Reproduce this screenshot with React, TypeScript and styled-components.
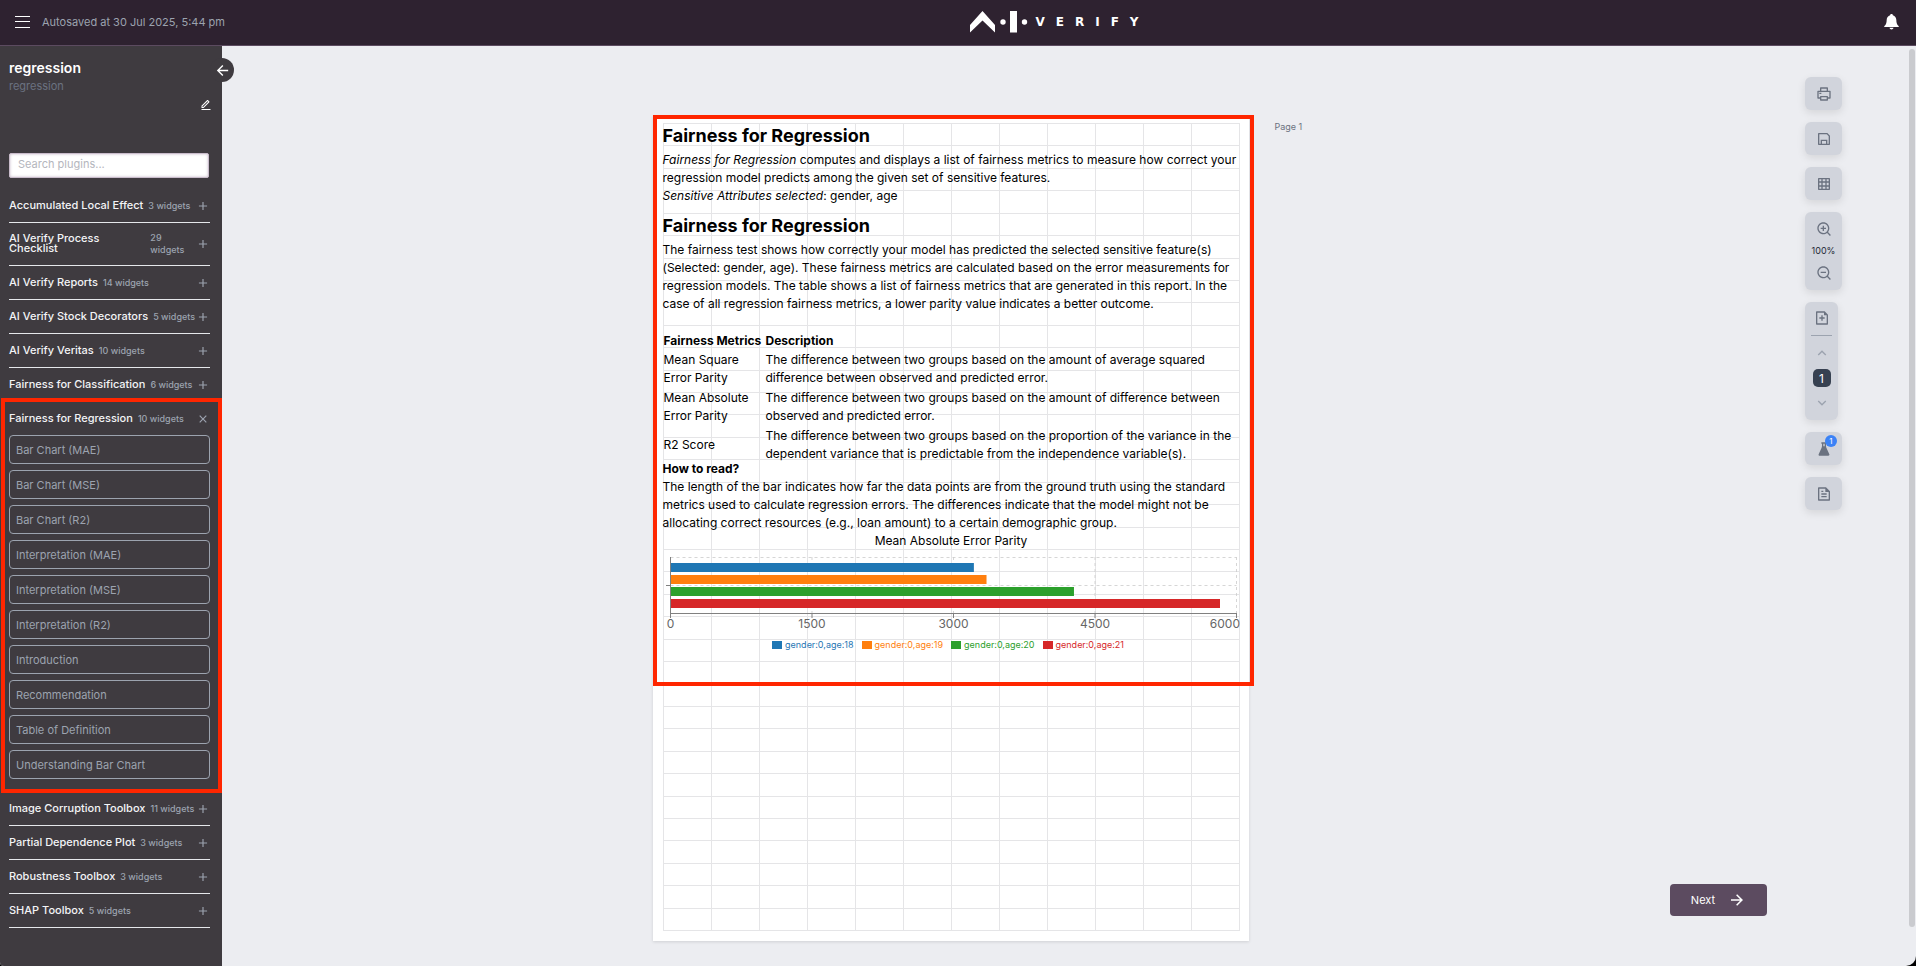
import React from 'react';
import styled, { createGlobalStyle, css } from 'styled-components';
import {
  RiAddLine,
  RiArrowDownSLine,
  RiArrowLeftLine,
  RiArrowRightLine,
  RiArrowUpSLine,
  RiCloseLine,
  RiEditLine,
  RiFileAddLine,
  RiFileTextLine,
  RiFlaskFill,
  RiGridLine,
  RiPrinterLine,
  RiSaveLine,
  RiZoomInLine,
  RiZoomOutLine,
} from 'react-icons/ri';

const GlobalStyle = createGlobalStyle`
  *, *::before, *::after { box-sizing: border-box; }
  html, body, #root { height: 100%; }
  body {
    margin: 0;
    background: #000;
    font-family: Inter, "Liberation Sans", sans-serif;
    -webkit-font-smoothing: antialiased;
  }
  h1, h2, h3, p { margin: 0; }
  button, input { font-family: inherit; }
`;

const colors = {
  header: '#2e2230',
  sidebar: '#3f3b40',
  accent: '#5c4b60',
  canvas: '#ecedf1',
  tool: '#d1d4dc',
  icon: '#6b7280',
  muted: '#9ca3af',
  highlight: '#ff2600',
};

const bareButton = css`
  display: inline-flex;
  align-items: center;
  justify-content: center;
  padding: 0;
  border: 0;
  background: none;
  color: inherit;
  cursor: pointer;
`;

const Shell = styled.div`
  display: flex;
  flex-direction: column;
  min-height: 100%;
  overflow: hidden;
  background: ${colors.canvas};
  border-radius: 0 0 10px 4px;
`;

/* ---------- Header ---------- */

const Header = styled.header`
  display: flex;
  align-items: center;
  justify-content: space-between;
  height: 46px;
  padding: 0 17px 2px 15px;
  background: ${colors.header};
  border-bottom: 1px solid ${colors.accent};
  color: #fff;
`;

const HeaderStart = styled.div`
  display: flex;
  align-items: center;
  gap: 12px;
`;

const IconButton = styled.button`
  ${bareButton}
`;

const SaveStatus = styled.span`
  font-size: 11px;
  line-height: 16px;
  color: ${colors.muted};
`;

const Logo = styled.a`
  display: flex;
  align-items: center;
  gap: 7px;
  color: #fff;
  text-decoration: none;
`;

const LogoWord = styled.span`
  margin-right: -11px;
  padding-top: 1px;
  font: bold 12px/16px "DejaVu Sans", sans-serif;
  letter-spacing: 11px;
`;

/* ---------- Sidebar ---------- */

const Body = styled.div`
  display: flex;
  flex: 1;
`;

const Sidebar = styled.aside`
  position: relative;
  flex: 0 0 222px;
  display: flex;
  flex-direction: column;
  padding: 12px 12px 24px 9px;
  background: ${colors.sidebar};
`;

const CollapseButton = styled.button`
  ${bareButton}
  position: absolute;
  top: 12px;
  right: -12px;
  width: 24px;
  height: 24px;
  border-radius: 50%;
  background: ${colors.sidebar};
  color: #fff;
`;

const ProjectName = styled.h1`
  font-size: 14px;
  line-height: 20px;
  font-weight: 600;
  color: #fff;
`;

const ProjectNote = styled.p`
  font-size: 11px;
  line-height: 16px;
  color: ${colors.icon};
`;

const EditRow = styled.div`
  display: flex;
  justify-content: flex-end;
  height: 59px;
  padding-top: 5px;
  margin-right: -2px;
  color: #fff;
`;

const EditButton = styled(IconButton)`
  width: 12px;
  height: 12px;
`;

const SearchInput = styled.input`
  width: 200px;
  height: 25px;
  margin-bottom: 11px;
  padding: 0 8px 3px;
  border: 1px solid #c9bccb;
  border-radius: 2px;
  background: #fff;
  box-shadow: inset 0 0 3px #c9bccb;
  font-size: 11px;
  outline: 0;
  &::placeholder {
    color: #b4b6bd;
    opacity: 1;
  }
`;

const Section = styled.section<{ $highlighted?: boolean }>`
  position: relative;
  border-bottom: 1px solid #e5e7eb;
  ${(p) =>
    p.$highlighted &&
    css`
      padding-bottom: 12px;
      &::after {
        content: '';
        position: absolute;
        inset: -4px -12px -2px -8px;
        border: 4px solid ${colors.highlight};
        pointer-events: none;
      }
    `}
`;

const SectionHeader = styled.button`
  ${bareButton}
  width: 100%;
  min-height: 33px;
  padding: 9px 0;
  text-align: left;
  color: ${colors.muted};
  svg {
    flex: none;
    margin-left: auto;
  }
`;

const SectionName = styled.span`
  margin: 0 5px 2px 0;
  font-size: 11px;
  line-height: 10px;
  font-weight: 500;
  color: #f3f4f6;
`;

const SectionCount = styled.span`
  font-size: 9px;
  line-height: 12px;
  font-weight: 500;
`;

const WidgetList = styled.div`
  display: flex;
  flex-direction: column;
  gap: 6px;
`;

const Widget = styled.button`
  ${bareButton}
  justify-content: flex-start;
  height: 29px;
  padding: 0 6px;
  border: 1px solid ${colors.muted};
  border-radius: 4px;
  font-size: 11px;
  line-height: 16px;
  color: ${colors.muted};
`;

/* ---------- Stage ---------- */

const Stage = styled.main`
  flex: 1;
  display: grid;
  grid-template-columns: 1fr auto 1fr;
  align-items: start;
  padding: 70px 0 24px 10px;
`;

const Page = styled.article`
  position: relative;
  grid-column: 2;
  width: 596px;
  min-height: 825px;
  padding: 7px 9px 10px 10px;
  background: #fff;
  box-shadow: 0 1px 3px rgba(0, 0, 0, 0.12);
`;

const PageHighlight = styled.div`
  position: absolute;
  inset: -1px -5px 255px 0;
  border: 4px solid ${colors.highlight};
  pointer-events: none;
`;

const PageLabel = styled.span`
  padding: 4px 0 0 26px;
  font-size: 9px;
  line-height: 14px;
  color: ${colors.icon};
`;

const PageGrid = styled.div`
  position: relative;
  min-height: 808px;
  color: #000;
`;

const GridLines = styled.svg`
  position: absolute;
  inset: 0;
  width: 100%;
  height: 100%;
  overflow: visible;
`;

const Content = styled.div`
  position: relative;
  font-size: 12px;
  line-height: 18px;
`;

const Title = styled.h2`
  padding-bottom: 2px;
  font-size: 18px;
  line-height: 26px;
  font-weight: 700;
  p + & {
    margin-top: 8px;
  }
`;

const Subtitle = styled.h3`
  font-size: 12px;
  line-height: 18px;
  font-weight: 700;
`;

const Metrics = styled.table`
  width: 100%;
  margin: 18px 0 -4px;
  border-collapse: collapse;
  th {
    padding: 1px 0 0 1px;
    text-align: left;
  }
  td {
    padding: 1px 0 1px 1px;
    vertical-align: middle;
  }
  th:first-child {
    width: 102px;
    white-space: nowrap;
  }
`;

const ChartTitle = styled.p`
  text-align: center;
`;

const Chart = styled.svg`
  display: block;
  width: 100%;
  height: 86px;
  overflow: visible;
  font-size: 12px;
`;

const Legend = styled.ul`
  display: flex;
  justify-content: center;
  gap: 8px;
  margin: 0;
  padding: 2px 6px 0 0;
  list-style: none;
  font-size: 9px;
  line-height: 14px;
`;

const LegendItem = styled.li<{ $color: string }>`
  display: flex;
  align-items: center;
  gap: 3px;
  color: ${(p) => p.$color};
  &::before {
    content: '';
    width: 10px;
    height: 8px;
    background: ${(p) => p.$color};
  }
`;

/* ---------- Tools ---------- */

const Side = styled.div`
  flex: 0 0 240px;
  display: flex;
  flex-direction: column;
  justify-content: space-between;
  align-items: flex-start;
  padding: 31px 0 50px 1px;
`;

const Tools = styled.nav`
  display: flex;
  flex-direction: column;
  align-items: flex-start;
  gap: 12px;
  margin-left: 135px;
  color: ${colors.icon};
`;

const toolSurface = css`
  background: ${colors.tool};
  border-radius: 6px;
  box-shadow: 0 3px 8px rgba(0, 0, 0, 0.1);
`;

const Tool = styled.button`
  ${bareButton}
  ${toolSurface}
  position: relative;
  width: 37px;
  height: 33px;
`;

const ZoomGroup = styled.div`
  ${toolSurface}
  display: flex;
  flex-direction: column;
  align-items: center;
  justify-content: space-between;
  width: 37px;
  height: 78px;
  padding: 9px 0;
`;

const ZoomLevel = styled.output`
  font-size: 9px;
  line-height: 12px;
  color: #1f2937;
`;

const PageNav = styled.div`
  ${toolSurface}
  display: flex;
  flex-direction: column;
  align-items: center;
  width: 33px;
  height: 118px;
  padding: 8px 6px;
`;

const Divider = styled.hr`
  width: 21px;
  margin: 9px 0 10px;
  border: 0;
  border-top: 1px solid ${colors.muted};
`;

const CurrentPage = styled.button`
  ${bareButton}
  width: 18px;
  height: 18px;
  margin: 9px 0;
  border-radius: 5px;
  background: #374151;
  color: #fff;
  font-size: 12px;
`;

const StepButton = styled(IconButton)`
  height: 14px;
  color: ${colors.muted};
`;

const Badge = styled.span`
  position: absolute;
  top: 3px;
  right: 5px;
  width: 12px;
  height: 12px;
  border-radius: 50%;
  background: #3b82f6;
  color: #fff;
  font-size: 8px;
  line-height: 12px;
`;

const NextButton = styled.button`
  ${bareButton}
  gap: 13px;
  width: 97px;
  height: 32px;
  border-radius: 4px;
  background: ${colors.accent};
  color: #fff;
  font-size: 11px;
  line-height: 16px;
`;

const ScrollTrack = styled.div`
  flex: 0 0 7px;
  padding: 3px 1px 39px 0;
  display: flex;
`;

const ScrollThumb = styled.div`
  flex: 1;
  border-radius: 3px;
  background: #cacbcf;
`;

/* ---------- Data ---------- */

type PluginInfo = { name: string; count: number; widgets?: string[] };

const plugins: PluginInfo[] = [
  { name: 'Accumulated Local Effect', count: 3 },
  { name: 'AI Verify Process Checklist', count: 29 },
  { name: 'AI Verify Reports', count: 14 },
  { name: 'AI Verify Stock Decorators', count: 5 },
  { name: 'AI Verify Veritas', count: 10 },
  { name: 'Fairness for Classification', count: 6 },
  {
    name: 'Fairness for Regression',
    count: 10,
    widgets: [
      'Bar Chart (MAE)',
      'Bar Chart (MSE)',
      'Bar Chart (R2)',
      'Interpretation (MAE)',
      'Interpretation (MSE)',
      'Interpretation (R2)',
      'Introduction',
      'Recommendation',
      'Table of Definition',
      'Understanding Bar Chart',
    ],
  },
  { name: 'Image Corruption Toolbox', count: 11 },
  { name: 'Partial Dependence Plot', count: 3 },
  { name: 'Robustness Toolbox', count: 3 },
  { name: 'SHAP Toolbox', count: 5 },
];

const metrics = [
  ['Mean Square Error Parity', 'The difference between two groups based on the amount of average squared difference between observed and predicted error.'],
  ['Mean Absolute Error Parity', 'The difference between two groups based on the amount of difference between observed and predicted error.'],
  ['R2 Score', 'The difference between two groups based on the proportion of the variance in the dependent variance that is predictable from the independence variable(s).'],
];

const series = [
  { label: 'gender:0,age:18', value: 3216, color: '#1f77b4' },
  { label: 'gender:0,age:19', value: 3350, color: '#ff7f0e' },
  { label: 'gender:0,age:20', value: 4277, color: '#2ca02c' },
  { label: 'gender:0,age:21', value: 5825, color: '#d62728' },
];

const ticks = [0, 1500, 3000, 4500, 6000];
const xOf = (value: number) => 7.5 + (value / 6000) * 566;

const COLUMNS = 12;
const ROWS = 36;
const range = (n: number) => Array.from({ length: n + 1 }, (_, i) => i);

/* ---------- Parts ---------- */

function Grid() {
  return (
    <GridLines stroke="#e5e5e7" strokeWidth="1" shapeRendering="crispEdges" aria-hidden="true">
      {range(COLUMNS).map((i) => (
        <line key={`c${i}`} x1={i * 48 + 0.5} x2={i * 48 + 0.5} y1="0" y2={ROWS * 22.42} />
      ))}
      {range(ROWS).map((i) => (
        <line key={`r${i}`} x1="0" x2="577" y1={Math.round(i * 22.42) + 0.5} y2={Math.round(i * 22.42) + 0.5} />
      ))}
    </GridLines>
  );
}

function ParityChart() {
  return (
    <Chart role="img" aria-label="Mean Absolute Error Parity">
      <g stroke="#ccc" strokeDasharray="3 3" strokeOpacity="0.8">
        <line x1="7.5" x2="573.5" y1="7.5" y2="7.5" />
        <line x1="7.5" x2="573.5" y1="35.5" y2="35.5" />
        {ticks.slice(1).map((t) => (
          <line key={t} x1={xOf(t)} x2={xOf(t)} y1="7" y2="63" />
        ))}
      </g>
      {series.map((s, i) => (
        <rect key={s.label} x="7" y={13 + i * 12} width={xOf(s.value) - 7} height="9" fill={s.color} />
      ))}
      <g stroke="#808080">
        <line x1="7.5" x2="7.5" y1="7" y2="64" />
        <line x1="3" x2="7" y1="35.5" y2="35.5" />
        <line x1="7" x2="574" y1="63.5" y2="63.5" />
        {ticks.map((t) => (
          <line key={t} x1={xOf(t)} x2={xOf(t)} y1="63" y2="68" />
        ))}
      </g>
      <g fill="#666">
        {ticks.map((t) => (
          <text key={t} x={t === 6000 ? 577 : xOf(t)} y="78" textAnchor={t === 6000 ? 'end' : 'middle'}>
            {t}
          </text>
        ))}
      </g>
    </Chart>
  );
}

function PluginSection({ name, count, widgets }: PluginInfo) {
  return (
    <Section $highlighted={!!widgets}>
      <SectionHeader type="button" aria-expanded={!!widgets}>
        <SectionName>{name}</SectionName>
        <SectionCount>{count} widgets</SectionCount>
        {widgets ? <RiCloseLine size={14} /> : <RiAddLine size={14} />}
      </SectionHeader>
      {widgets && (
        <WidgetList>
          {widgets.map((w) => (
            <Widget key={w} type="button">
              {w}
            </Widget>
          ))}
        </WidgetList>
      )}
    </Section>
  );
}

export default function App() {
  return (
    <Shell>
      <GlobalStyle />
      <Header>
        <HeaderStart>
          <IconButton type="button" aria-label="Menu">
            <svg width="15" height="12" stroke="currentColor" strokeWidth="1">
              <path d="M0 .5h15M0 5.500h15M0 11.500h15" />
            </svg>
          </IconButton>
          <SaveStatus>Autosaved at 30 Jul 2025, 5:44 pm</SaveStatus>
        </HeaderStart>
        <Logo href="#" aria-label="AI Verify">
          <svg width="58" height="22" fill="currentColor">
            <path d="M0 14 12.500 0 25 14V21.500L12.500 9.500 0 21.500Z" />
            <circle cx="33" cy="11" r="2.700" />
            <rect x="40" width="7" height="21.500" />
            <circle cx="54.500" cy="11" r="2.700" />
          </svg>
          <LogoWord>VERIFY</LogoWord>
        </Logo>
        <IconButton type="button" aria-label="Notifications">
          <svg width="15" height="16" viewBox="0 0 15 16" fill="currentColor">
            <path d="M7.500 0c.8 0 1.300.5 1.400 1.200 2.100.6 3.300 2.300 3.400 4.600.1 3 .6 4.700 1.700 5.700.5.400.8.700.8 1.500H.2c0-.8.3-1.100.8-1.500 1.100-1 1.600-2.700 1.700-5.700.1-2.300 1.300-4 3.400-4.600C6.200.5 6.700 0 7.500 0ZM5.500 13.800h4c-.2 1-1 1.700-2 1.700s-1.800-.7-2-1.700Z" />
          </svg>
        </IconButton>
      </Header>

      <Body>
        <Sidebar>
          <CollapseButton type="button" aria-label="Collapse panel">
            <RiArrowLeftLine size={17} />
          </CollapseButton>
          <ProjectName>regression</ProjectName>
          <ProjectNote>regression</ProjectNote>
          <EditRow>
            <EditButton type="button" aria-label="Edit project">
              <RiEditLine size={12} />
            </EditButton>
          </EditRow>
          <SearchInput type="search" placeholder="Search plugins..." aria-label="Search plugins" />
          {plugins.map((p) => (
            <PluginSection key={p.name} {...p} />
          ))}
        </Sidebar>

        <Stage>
          <Page>
            <PageGrid>
              <Grid />
              <Content>
                <Title>Fairness for Regression</Title>
                <p>
                  <em>Fairness for Regression</em> computes and displays a list of fairness metrics to measure how
                  correct your regression model predicts among the given set of sensitive features.
                  <br />
                  <em>Sensitive Attributes selected</em>: gender, age
                </p>
                <Title>Fairness for Regression</Title>
                <p>
                  The fairness test shows how correctly your model has predicted the selected sensitive feature(s)
                  (Selected: gender, age). These fairness metrics are calculated based on the error measurements for
                  regression models. The table shows a list of fairness metrics that are generated in this report. In
                  the case of all regression fairness metrics, a lower parity value indicates a better outcome.
                </p>
                <Metrics>
                  <thead>
                    <tr>
                      <th>Fairness Metrics</th>
                      <th>Description</th>
                    </tr>
                  </thead>
                  <tbody>
                    {metrics.map(([name, description]) => (
                      <tr key={name}>
                        <td>{name}</td>
                        <td>{description}</td>
                      </tr>
                    ))}
                  </tbody>
                </Metrics>
                <Subtitle>How to read?</Subtitle>
                <p>
                  The length of the bar indicates how far the data points are from the ground truth using the standard
                  metrics used to calculate regression errors. The differences indicate that the model might not be
                  allocating correct resources (e.g., loan amount) to a certain demographic group.
                </p>
                <ChartTitle>Mean Absolute Error Parity</ChartTitle>
                <ParityChart />
                <Legend>
                  {series.map((s) => (
                    <LegendItem key={s.label} $color={s.color}>
                      {s.label}
                    </LegendItem>
                  ))}
                </Legend>
              </Content>
            </PageGrid>
            <PageHighlight />
          </Page>
          <PageLabel>Page 1</PageLabel>
        </Stage>

        <Side>
          <Tools aria-label="Canvas tools">
            <Tool type="button" aria-label="Print">
              <RiPrinterLine size={16} />
            </Tool>
            <Tool type="button" aria-label="Save">
              <RiSaveLine size={16} />
            </Tool>
            <Tool type="button" aria-label="Toggle grid">
              <RiGridLine size={16} />
            </Tool>
            <ZoomGroup>
              <IconButton type="button" aria-label="Zoom in">
                <RiZoomInLine size={16} />
              </IconButton>
              <ZoomLevel>100%</ZoomLevel>
              <IconButton type="button" aria-label="Zoom out">
                <RiZoomOutLine size={16} />
              </IconButton>
            </ZoomGroup>
            <PageNav>
              <IconButton type="button" aria-label="Add page">
                <RiFileAddLine size={16} />
              </IconButton>
              <Divider />
              <StepButton type="button" aria-label="Previous page">
                <RiArrowUpSLine size={16} />
              </StepButton>
              <CurrentPage type="button">1</CurrentPage>
              <StepButton type="button" aria-label="Next page">
                <RiArrowDownSLine size={16} />
              </StepButton>
            </PageNav>
            <Tool type="button" aria-label="Test results">
              <RiFlaskFill size={16} />
              <Badge>1</Badge>
            </Tool>
            <Tool type="button" aria-label="Input data">
              <RiFileTextLine size={16} />
            </Tool>
          </Tools>
          <NextButton type="button">
            Next
            <RiArrowRightLine size={18} />
          </NextButton>
        </Side>
        <ScrollTrack>
          <ScrollThumb />
        </ScrollTrack>
      </Body>
    </Shell>
  );
}
